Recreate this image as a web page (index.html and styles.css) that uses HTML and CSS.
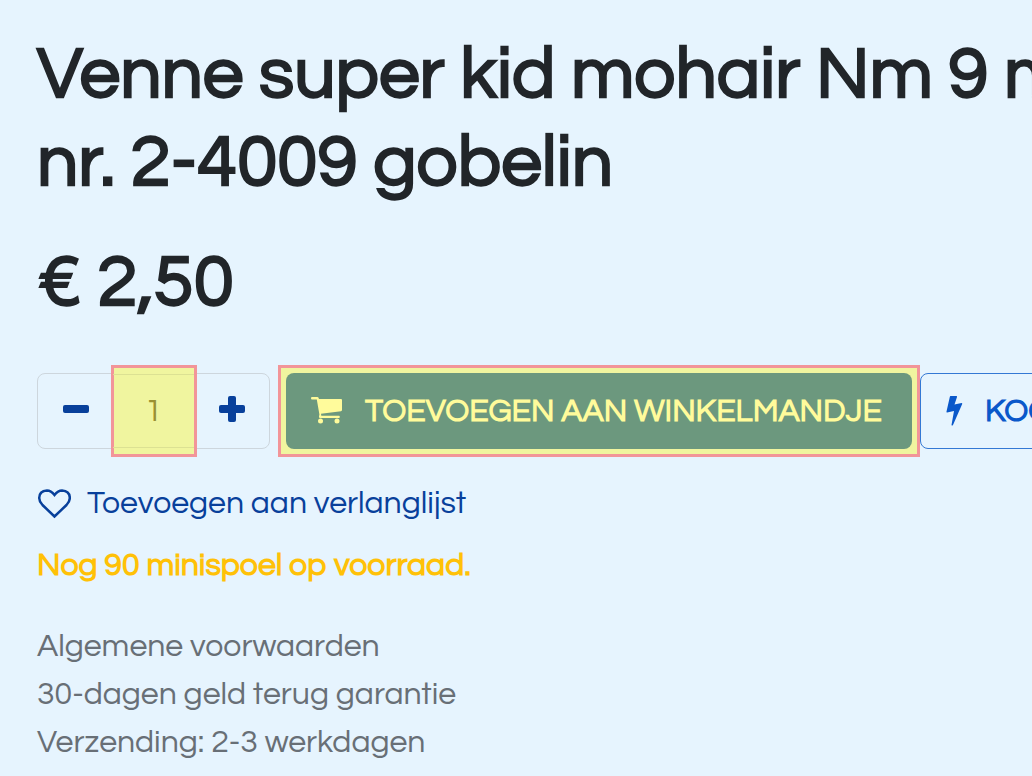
FILE: index.html
```html
<!DOCTYPE html>
<html lang="nl">
<head>
    <meta charset="UTF-8">
    <meta name="viewport" content="width=device-width, initial-scale=1.0">
    <title>Venne super kid mohair Nm 9</title>
    <link rel="stylesheet" href="styles.css">
</head>
<body>

    <main class="product">
        <h1 class="product-title">Venne super kid mohair Nm 9 minispoel<br>nr. 2-4009 gobelin</h1>
        <div class="price">€ 2,50</div>

        <!-- Quantity and cart buttons -->
        <form class="actions">
            <div class="quantity">
                <button type="button" class="qty-btn" aria-label="Minder">
                    <svg width="26" height="26" viewBox="0 0 26 26"><rect x="0" y="9" width="26" height="8" rx="2"/></svg>
                </button>
                <div class="qty-field">
                    <input class="qty-input" type="text" value="1" aria-label="Aantal">
                </div>
                <button type="button" class="qty-btn" aria-label="Meer">
                    <svg width="26" height="26" viewBox="0 0 26 26"><rect x="0" y="9" width="26" height="8" rx="2"/><rect x="9" y="0" width="8" height="26" rx="2"/></svg>
                </button>
            </div>
            <div class="cart-highlight">
                <button type="button" class="btn btn-cart">
                    <svg width="32" height="28" viewBox="0 0 32 28"><path d="M1 0H6.500Q7.600 0 8 2H30Q31 2 31 3V13Q31 14 30 14.200L10 16.700L10.300 18.800H28Q28.800 18.800 28.800 19.900T28 21H9Q7.500 21 8 19.300L8.400 17.500L5.800 2.500H1Q0 2.500 0 1.300T1 0Z"/><circle cx="9.500" cy="24" r="2.500"/><circle cx="26" cy="24" r="2.500"/></svg>
                    <span>TOEVOEGEN AAN WINKELMANDJE</span>
                </button>
            </div>
            <button type="button" class="btn btn-buy">
                <svg width="17" height="32" viewBox="0 0 17 32"><path d="M4.500 1H10.500Q11.200 1 11 2L8.500 9.500L15.500 8Q16.500 8 16.200 9L7 30Q6 31 5.500 30L8 16L1 17.500Q.200 17.500 .500 16.500L3.800 2Q4 1 4.500 1Z"/></svg>
                <span>KOOP NU</span>
            </button>
        </form>

        <a class="wishlist" href="#">
            <svg width="34" height="30" viewBox="0 0 34 30"><path d="M17.500 27.500L5.500 16Q2.200 12.500 2.200 9Q2.200 2 10 1.500Q14 1.500 17.500 6Q21 1.500 25 1.500Q32.800 2 32.800 9Q32.800 12.500 29.500 16Z"/></svg>
            <span>Toevoegen aan verlanglijst</span>
        </a>

        <p class="stock">Nog 90 minispoel op voorraad.</p>

        <ul class="terms">
            <li>Algemene voorwaarden</li>
            <li>30-dagen geld terug garantie</li>
            <li>Verzending: 2-3 werkdagen</li>
        </ul>
    </main>

</body>
</html>
```
FILE: styles.css
```css
* {
    margin: 0;
    padding: 0;
    box-sizing: border-box;
}

body {
    font-family: Questrial, Inter, sans-serif;
    font-size: 32px;
    line-height: 48px;
    background: #e6f4fe;
    color: #212529;
    overflow-x: hidden;
}

.product {
    padding: 31px 0 0 37px;
    white-space: nowrap;
    overflow: hidden;
}

.product-title,
.price {
    font-size: 73px;
    font-weight: 700;
    line-height: 88px;
}

.price {
    margin-top: 32px;
}

.actions {
    display: flex;
    align-items: center;
    margin-top: 38px;
}

.quantity {
    display: flex;
    flex: none;
    height: 76px;
    margin-right: 8px;
    border: 1px solid #cdd6dd;
    border-radius: 8px;
}

.qty-btn {
    display: flex;
    align-items: center;
    justify-content: center;
    width: 75px;
    padding-bottom: 4px;
    background: none;
    border: none;
    fill: #08409b;
    cursor: pointer;
}

.qty-field {
    position: relative;
    width: 81px;
}

/* highlight frame over the number field */
.qty-field::before {
    content: "";
    position: absolute;
    inset: -9px -3px -9px -2px;
    background: #f0f59f;
    border: 3px solid #f29599;
}

.qty-input {
    position: relative;
    width: 100%;
    height: 100%;
    background: none;
    border-width: 1px 0;
    border-style: solid;
    border-color: #dce193;
    color: #9b9132;
    font-family: inherit;
    font-size: 32px;
    text-align: center;
}

.cart-highlight {
    flex: none;
    padding: 5px;
    background: #f0f59f;
    border: 3px solid #f29599;
}

.btn {
    display: flex;
    flex: none;
    align-items: center;
    gap: 22px;
    height: 76px;
    padding: 0 30px 0 25px;
    border-radius: 8px;
    font-family: inherit;
    font-size: 32px;
    font-weight: 700;
    cursor: pointer;
}

.btn-cart {
    background: #6c987e;
    border: none;
    color: #fffb9b;
    fill: #fffb9b;
}

.btn-buy {
    background: none;
    border: 1px solid #3478d4;
    color: #0a58ca;
    fill: #0a58ca;
}

.wishlist {
    display: flex;
    align-items: center;
    gap: 16px;
    margin-top: 23px;
    color: #08409b;
    text-decoration: none;
}

.wishlist svg {
    fill: none;
    stroke: #08409b;
    stroke-width: 2.5;
}

.stock {
    margin-top: 14px;
    color: #ffc107;
    font-weight: 700;
}

.terms {
    margin-top: 33px;
    color: #686f76;
    list-style: none;
}
```
